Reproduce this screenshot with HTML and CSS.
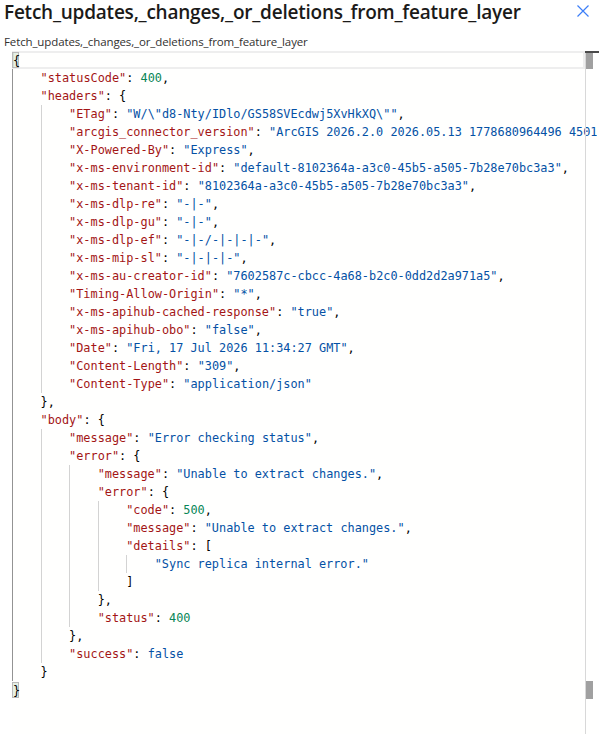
FILE: index.html
```html
<!DOCTYPE html>
<html>
<head>
<meta charset="utf-8">
<link rel="stylesheet" href="styles.css">
</head>
<body>
<div class="header">
  <h1 class="title">Fetch_updates,_changes,_or_deletions_from_feature_layer</h1>
  <svg class="close" viewBox="0 0 12 12" width="12" height="12"><path d="M0.5 0.5 L11.5 11.5 M11.5 0.5 L0.5 11.5" stroke="#3c7ef8" stroke-width="1.2" fill="none"/></svg>
</div>
<div class="subtitle">Fetch_updates,_changes,_or_deletions_from_feature_layer</div>
<div class="editor">
  <div class="lines">
    <div class="ln cur"><span class="bm">{</span></div>
    <div class="ln"><span class="g a"></span><span class="k">"statusCode"</span>: <span class="n">400</span>,</div>
    <div class="ln"><span class="g a"></span><span class="k">"headers"</span>: {</div>
    <div class="ln"><span class="g a"></span><span class="g"></span><span class="k">"ETag"</span>: <span class="s">"W/\"d8-Nty/IDlo/GS58SVEcdwj5XvHkXQ\""</span>,</div>
    <div class="ln"><span class="g a"></span><span class="g"></span><span class="k">"arcgis_connector_version"</span>: <span class="s">"ArcGIS 2026.2.0 2026.05.13 1778680964496 4501"</span>,</div>
    <div class="ln"><span class="g a"></span><span class="g"></span><span class="k">"X-Powered-By"</span>: <span class="s">"Express"</span>,</div>
    <div class="ln"><span class="g a"></span><span class="g"></span><span class="k">"x-ms-environment-id"</span>: <span class="s">"default-8102364a-a3c0-45b5-a505-7b28e70bc3a3"</span>,</div>
    <div class="ln"><span class="g a"></span><span class="g"></span><span class="k">"x-ms-tenant-id"</span>: <span class="s">"8102364a-a3c0-45b5-a505-7b28e70bc3a3"</span>,</div>
    <div class="ln"><span class="g a"></span><span class="g"></span><span class="k">"x-ms-dlp-re"</span>: <span class="s">"-|-"</span>,</div>
    <div class="ln"><span class="g a"></span><span class="g"></span><span class="k">"x-ms-dlp-gu"</span>: <span class="s">"-|-"</span>,</div>
    <div class="ln"><span class="g a"></span><span class="g"></span><span class="k">"x-ms-dlp-ef"</span>: <span class="s">"-|-/-|-|-|-"</span>,</div>
    <div class="ln"><span class="g a"></span><span class="g"></span><span class="k">"x-ms-mip-sl"</span>: <span class="s">"-|-|-|-"</span>,</div>
    <div class="ln"><span class="g a"></span><span class="g"></span><span class="k">"x-ms-au-creator-id"</span>: <span class="s">"7602587c-cbcc-4a68-b2c0-0dd2d2a971a5"</span>,</div>
    <div class="ln"><span class="g a"></span><span class="g"></span><span class="k">"Timing-Allow-Origin"</span>: <span class="s">"*"</span>,</div>
    <div class="ln"><span class="g a"></span><span class="g"></span><span class="k">"x-ms-apihub-cached-response"</span>: <span class="s">"true"</span>,</div>
    <div class="ln"><span class="g a"></span><span class="g"></span><span class="k">"x-ms-apihub-obo"</span>: <span class="s">"false"</span>,</div>
    <div class="ln"><span class="g a"></span><span class="g"></span><span class="k">"Date"</span>: <span class="s">"Fri, 17 Jul 2026 11:34:27 GMT"</span>,</div>
    <div class="ln"><span class="g a"></span><span class="g"></span><span class="k">"Content-Length"</span>: <span class="s">"309"</span>,</div>
    <div class="ln"><span class="g a"></span><span class="g"></span><span class="k">"Content-Type"</span>: <span class="s">"application/json"</span></div>
    <div class="ln"><span class="g a"></span>},</div>
    <div class="ln"><span class="g a"></span><span class="k">"body"</span>: {</div>
    <div class="ln"><span class="g a"></span><span class="g"></span><span class="k">"message"</span>: <span class="s">"Error checking status"</span>,</div>
    <div class="ln"><span class="g a"></span><span class="g"></span><span class="k">"error"</span>: {</div>
    <div class="ln"><span class="g a"></span><span class="g"></span><span class="g"></span><span class="k">"message"</span>: <span class="s">"Unable to extract changes."</span>,</div>
    <div class="ln"><span class="g a"></span><span class="g"></span><span class="g"></span><span class="k">"error"</span>: {</div>
    <div class="ln"><span class="g a"></span><span class="g"></span><span class="g"></span><span class="g"></span><span class="k">"code"</span>: <span class="n">500</span>,</div>
    <div class="ln"><span class="g a"></span><span class="g"></span><span class="g"></span><span class="g"></span><span class="k">"message"</span>: <span class="s">"Unable to extract changes."</span>,</div>
    <div class="ln"><span class="g a"></span><span class="g"></span><span class="g"></span><span class="g"></span><span class="k">"details"</span>: [</div>
    <div class="ln"><span class="g a"></span><span class="g"></span><span class="g"></span><span class="g"></span><span class="g"></span><span class="s">"Sync replica internal error."</span></div>
    <div class="ln"><span class="g a"></span><span class="g"></span><span class="g"></span><span class="g"></span>]</div>
    <div class="ln"><span class="g a"></span><span class="g"></span><span class="g"></span>},</div>
    <div class="ln"><span class="g a"></span><span class="g"></span><span class="g"></span><span class="k">"status"</span>: <span class="n">400</span></div>
    <div class="ln"><span class="g a"></span><span class="g"></span>},</div>
    <div class="ln"><span class="g a"></span><span class="g"></span><span class="k">"success"</span>: <span class="b">false</span></div>
    <div class="ln"><span class="g a"></span>}</div>
    <div class="ln"><span class="bm">}</span></div>
  </div>
  <div class="ruler">
    <div class="cursor-mark"></div>
    <div class="mk mk-top"></div>
    <div class="mk mk-bottom"></div>
  </div>
</div>
</body>
</html>
```
FILE: styles.css
```css
html, body {
  margin: 0;
  padding: 0;
  background: #ffffff;
  overflow: hidden;
}

body {
  font-family: "Open Sans", "Noto Sans", sans-serif;
  color: #201f1e;
}

.header {
  display: flex;
  justify-content: space-between;
  align-items: flex-start;
  padding-left: 4px;
  height: 26px;
}

.title {
  margin: 0;
  font-size: 19px;
  font-weight: 600;
  line-height: 24px;
  color: #1b1a19;
  letter-spacing: -0.23px;
}

.close {
  margin: 5px 16px 0 0;
  flex: none;
}

.subtitle {
  padding-left: 4px;
  margin-top: 8px;
  font-size: 11.5px;
  letter-spacing: -0.12px;
  line-height: 16px;
  color: #323130;
  height: 17px;
}

.editor {
  position: relative;
  margin-left: 12px;
  width: 587px;
  height: 690px;
  background: #fffffe;
}

.lines {
  width: 585px;
  overflow: hidden;
  font-family: "DejaVu Sans Mono", monospace;
  font-size: 11.86px;
  color: #000000;
}

.ln {
  height: 18px;
  line-height: 18px;
  white-space: pre;
}

.ln.cur {
  width: 573px;
  box-shadow: inset 0 0 0 2px #eeeeee;
}

.g {
  display: inline-block;
  width: 4ch;
  height: 18px;
  vertical-align: top;
  box-shadow: inset 1px 0 0 #d3d3d3;
}

.g.a {
  box-shadow: inset 1px 0 0 #939393;
}

.bm {
  display: inline-block;
  width: 1ch;
  height: 16px;
  margin-top: 1px;
  line-height: 16px;
  vertical-align: top;
  box-sizing: border-box;
  border: 1px solid #b9b9b9;
  background: rgba(0, 100, 0, 0.1);
}

.k { color: #a31515; }
.s { color: #0451a5; }
.n { color: #098658; }
.b { color: #0451a5; }

.ruler {
  position: absolute;
  top: 0;
  bottom: 0;
  left: 573px;
  width: 14px;
  border-left: 1px solid #d8d8d8;
  box-sizing: border-box;
}

.cursor-mark {
  position: absolute;
  top: 0;
  left: -1px;
  width: 14px;
  height: 2px;
  background: #4a4a4a;
}

.mk {
  position: absolute;
  left: 0;
  width: 7px;
  background: #a0a0a0;
}

.mk-top {
  top: 2px;
  height: 16px;
}

.mk-bottom {
  top: 630px;
  height: 18px;
}
```
